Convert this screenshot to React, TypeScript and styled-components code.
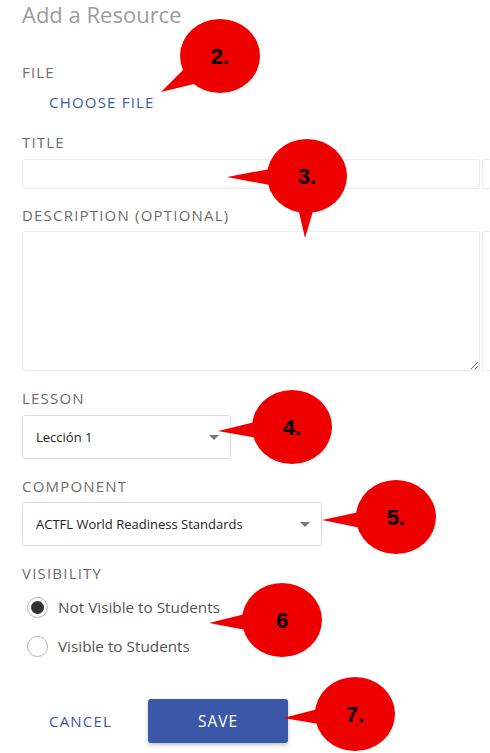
import styled, { createGlobalStyle } from "styled-components";

const GlobalStyle = createGlobalStyle`
  * { box-sizing: border-box; }
  html, body { margin: 0; padding: 0; background: #ffffff; }
  body { font-family: "Open Sans", "Liberation Sans", sans-serif; }
`;

const Page = styled.div`
  position: relative;
  width: 490px;
  height: 753px;
  overflow: hidden;
  background: #ffffff;
`;

const Form = styled.div`
  display: flex;
  flex-direction: column;
  padding: 0 0 0 22px;
`;

const Heading = styled.h1`
  margin: -1px 0 0 0;
  font-size: 22px;
  line-height: 30px;
  font-weight: 400;
  color: #9c9c9c;
`;

const Label = styled.div<{ top: number }>`
  margin-top: ${({ top }) => top}px;
  font-size: 15px;
  line-height: 20px;
  letter-spacing: 1.2px;
  color: #6e6e6e;
  text-transform: uppercase;
`;

const LinkButton = styled.button`
  border: none;
  background: none;
  padding: 0;
  font-family: inherit;
  font-size: 15px;
  line-height: 20px;
  letter-spacing: 1.2px;
  color: #3d5aa9;
  text-transform: uppercase;
  cursor: pointer;
  text-align: left;
`;

const FileRow = styled.div`
  display: flex;
  margin-top: 10px;
  padding-left: 27px;
`;

const InputRow = styled.div<{ top: number }>`
  display: flex;
  gap: 2px;
  margin-top: ${({ top }) => top}px;
`;

const TextInput = styled.input`
  width: 458px;
  height: 30px;
  border: 1px solid #ececec;
  border-radius: 3px;
  padding: 0 10px;
  font-family: inherit;
  font-size: 14px;
  outline: none;
`;

const TextArea = styled.textarea`
  display: block;
  width: 458px;
  height: 140px;
  border: 1px solid #ececec;
  border-radius: 3px;
  padding: 8px 10px;
  font-family: inherit;
  font-size: 14px;
  outline: none;
  resize: vertical;
`;

const Stub = styled.div`
  flex: 1;
  border-top: 1px solid #ececec;
  border-left: 1px solid #ececec;
  border-bottom: 1px solid #ececec;
  border-radius: 3px 0 0 3px;
`;

const SelectBox = styled.div<{ width: number; top: number }>`
  margin-top: ${({ top }) => top}px;
  width: ${({ width }) => width}px;
  height: 44px;
  border: 1px solid #dcdcdc;
  border-radius: 3px;
  display: flex;
  align-items: center;
  justify-content: space-between;
  padding: 0 11px 0 13px;
  font-size: 13px;
  color: #222222;
`;

const Caret = styled.span`
  width: 0;
  height: 0;
  border-left: 5px solid transparent;
  border-right: 5px solid transparent;
  border-top: 5px solid #777777;
`;

const RadioList = styled.div`
  display: flex;
  flex-direction: column;
  gap: 18px;
  margin-top: 14px;
  padding-left: 5px;
`;

const RadioRow = styled.label`
  display: flex;
  align-items: center;
  gap: 10px;
  font-size: 15.3px;
  line-height: 21px;
  color: #555555;
`;

const RadioCircle = styled.span<{ checked: boolean }>`
  width: 21px;
  height: 21px;
  border-radius: 50%;
  border: 1.5px solid #b4b4b4;
  display: flex;
  align-items: center;
  justify-content: center;
  &::after {
    content: "";
    width: 13px;
    height: 13px;
    border-radius: 50%;
    background: ${({ checked }) => (checked ? "#333333" : "transparent")};
  }
`;

const Actions = styled.div`
  display: flex;
  align-items: center;
  gap: 36px;
  margin-top: 42px;
  padding-left: 27px;
`;

const SaveButton = styled.button`
  width: 140px;
  height: 44px;
  border: none;
  border-radius: 3px;
  background: #3a57a8;
  color: #ffffff;
  font-family: inherit;
  font-size: 15.5px;
  font-weight: 400;
  letter-spacing: 1px;
  box-shadow: 0 2px 4px rgba(0, 0, 0, 0.25);
  cursor: pointer;
`;

const Overlay = styled.svg`
  position: absolute;
  left: 0;
  top: 0;
  pointer-events: none;
`;

const CalloutText = styled.text`
  font-family: "Liberation Sans", Arial, sans-serif;
  font-weight: bold;
  font-size: 22px;
  fill: #000000;
`;

type CalloutProps = {
  cx: number;
  cy: number;
  tails: string[];
  label: string;
};

const Callout = ({ cx, cy, tails, label }: CalloutProps) => (
  <g>
    {tails.map((t) => (
      <polygon key={t} points={t} fill="#ee0000" />
    ))}
    <ellipse cx={cx} cy={cy} rx={40} ry={37} fill="#ee0000" />
    <CalloutText x={cx} y={cy + 8} textAnchor="middle">
      {label}
    </CalloutText>
  </g>
);

const App = () => {
  return (
    <Page>
      <GlobalStyle />
      <Form>
        <Heading>Add a Resource</Heading>
        <Label top={33}>File</Label>
        <FileRow>
          <LinkButton>Choose File</LinkButton>
        </FileRow>
        <Label top={20}>Title</Label>
        <InputRow top={7}>
          <TextInput />
          <Stub />
        </InputRow>
        <Label top={16}>Description (optional)</Label>
        <InputRow top={6}>
          <TextArea />
          <Stub />
        </InputRow>
        <Label top={17}>Lesson</Label>
        <SelectBox width={209} top={7}>
          <span>Lección 1</span>
          <Caret />
        </SelectBox>
        <Label top={17}>Component</Label>
        <SelectBox width={300} top={6}>
          <span>ACTFL World Readiness Standards</span>
          <Caret />
        </SelectBox>
        <Label top={17}>Visibility</Label>
        <RadioList>
          <RadioRow>
            <RadioCircle checked />
            Not Visible to Students
          </RadioRow>
          <RadioRow>
            <RadioCircle checked={false} />
            Visible to Students
          </RadioRow>
        </RadioList>
        <Actions>
          <LinkButton>Cancel</LinkButton>
          <SaveButton>SAVE</SaveButton>
        </Actions>
      </Form>
      <Overlay width={490} height={753}>
        <Callout cx={220} cy={56} label="2." tails={["161,92 183,70 194,84"]} />
        <Callout
          cx={307}
          cy={176}
          label="3."
          tails={["227,177 270,169 270,185", "305,238 298,208 314,208"]}
        />
        <Callout cx={292} cy={427} label="4." tails={["218,431 255,422 257,438"]} />
        <Callout cx={396} cy={517} label="5." tails={["322,520 359,512 361,528"]} />
        <Callout cx={282} cy={620} label="6" tails={["209,623 245,614 246,630"]} />
        <Callout cx={355} cy={714} label="7." tails={["283,718 318,709 319,724"]} />
      </Overlay>
    </Page>
  );
};

export default App;
